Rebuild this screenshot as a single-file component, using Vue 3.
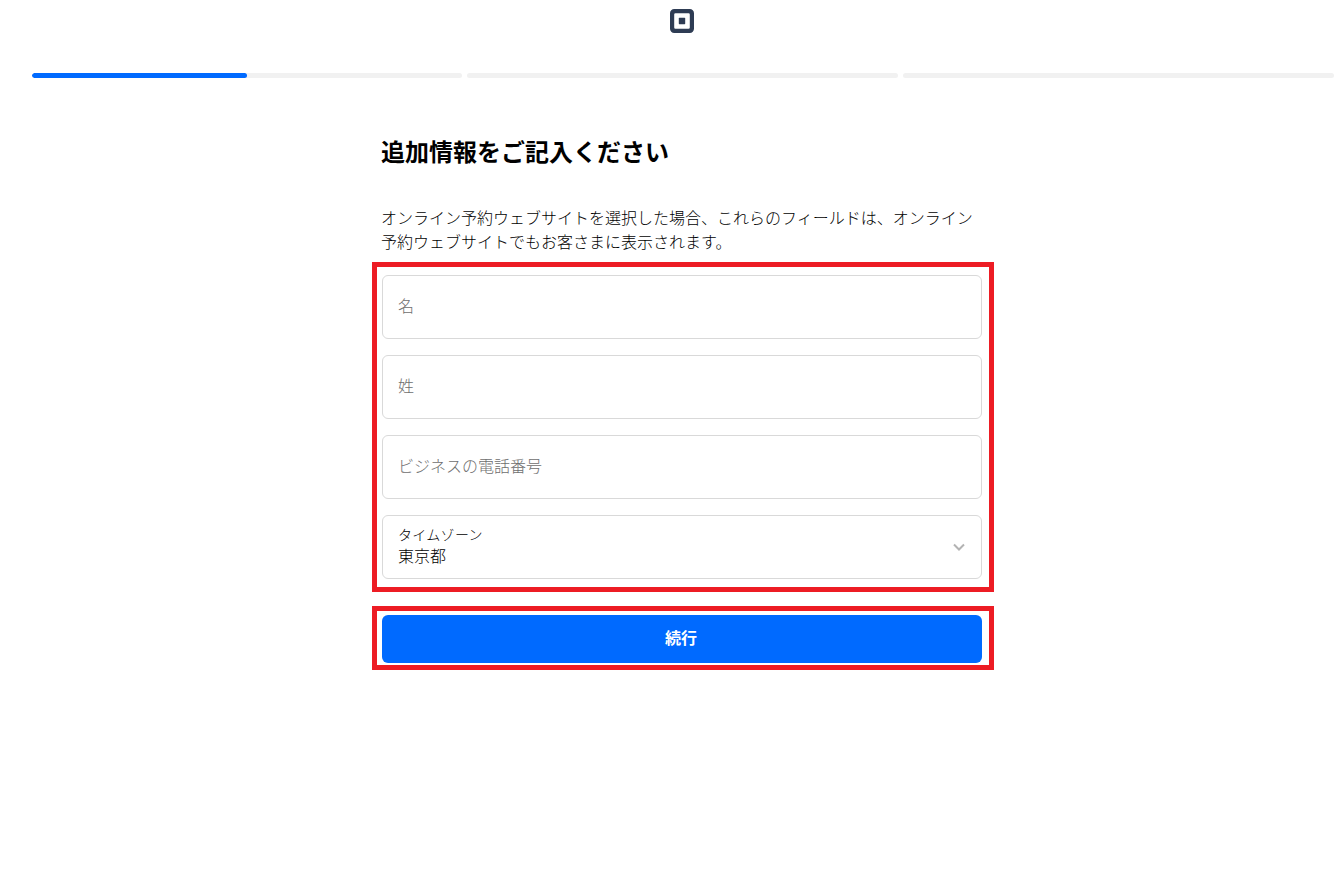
<template>
  <div class="page">
    <header class="logo-row">
      <svg class="logo" width="24" height="24" viewBox="0 0 24 24">
        <path
          fill="#2e3c54"
          fill-rule="evenodd"
          d="M4.2 0h15.6A4.2 4.2 0 0 1 24 4.2v15.6a4.2 4.2 0 0 1-4.2 4.2H4.2A4.2 4.2 0 0 1 0 19.800V4.200A4.200 4.200 0 0 1 4.200 0zM5.400 4.200a1.200 1.200 0 0 0-1.200 1.200v13.200a1.200 1.200 0 0 0 1.200 1.200h13.200a1.200 1.200 0 0 0 1.200-1.200V5.400a1.200 1.200 0 0 0-1.200-1.200z"
        />
        <rect x="8.800" y="8.800" width="6.400" height="6.400" rx="0.600" fill="#2e3c54" />
      </svg>
    </header>

    <div class="progress">
      <div v-for="(seg, i) in segments" :key="i" class="segment">
        <div class="segment-fill" :style="{ width: seg + '%' }" />
      </div>
    </div>

    <main class="content">
      <h1 class="title">追加情報をご記入ください</h1>
      <p class="desc">
        オンライン予約ウェブサイトを選択した場合、これらのフィールドは、オンライン予約ウェブサイトでもお客さまに表示されます。
      </p>

      <div class="marked fields">
        <div v-for="f in fields" :key="f" class="field">
          <span class="placeholder">{{ f }}</span>
        </div>
        <div class="field select">
          <div class="select-text">
            <span class="select-label">タイムゾーン</span>
            <span class="select-value">東京都</span>
          </div>
          <svg class="chevron" width="14" height="14" viewBox="0 0 14 14">
            <path d="M2 4.500l5 5 5-5" fill="none" stroke="#b3b3b3" stroke-width="2" />
          </svg>
        </div>
      </div>

      <div class="marked action">
        <button class="continue" type="button"><span>続行</span></button>
      </div>
    </main>
  </div>
</template>

<script setup>
const segments = [50, 0, 0];
const fields = ["名", "姓", "ビジネスの電話番号"];
</script>

<style>
html,
body {
  margin: 0;
  background: #fff;
}
</style>

<style scoped>
.page {
  box-sizing: border-box;
  height: 896px;
  overflow: hidden;
  padding: 0 12px 0 32px;
  font-family: "Noto Sans CJK JP", "Liberation Sans", sans-serif;
  color: #1a1a1a;
}

.logo-row {
  display: flex;
  justify-content: center;
  padding-top: 9px;
}

.logo {
  display: block;
}

.progress {
  display: flex;
  gap: 5px;
  margin: 40px -2px 0 0;
}

.segment {
  flex: 1;
  height: 5px;
  border-radius: 3px;
  background: #f1f1f1;
  overflow: hidden;
}

.segment:first-child {
  flex: 0 0 430px;
}

.segment-fill {
  height: 100%;
  border-radius: 3px;
  background: #006aff;
}

.content {
  width: 600px;
  margin: 0 auto;
}

.title {
  margin: 56px 0 0 -1px;
  font-size: 24px;
  line-height: 34px;
  font-weight: 700;
  color: #000;
}

.desc {
  margin: 37px 0 0 -1px;
  font-size: 16px;
  line-height: 24px;
  font-weight: 300;
  color: #000;
}

.marked {
  border: 5px solid #ed1c24;
  margin: 0 -12px 0 -10px;
  padding-left: 5px;
  padding-right: 7px;
}

.fields {
  display: flex;
  flex-direction: column;
  gap: 16px;
  margin-top: 9px;
  padding-top: 8px;
  padding-bottom: 8px;
}

.field {
  display: flex;
  align-items: center;
  justify-content: space-between;
  box-sizing: border-box;
  height: 64px;
  padding: 0 16px 0 15px;
  border: 1px solid #d9d9d9;
  border-radius: 6px;
  background: #fff;
}

.placeholder {
  padding-bottom: 4px;
  font-size: 16px;
  font-weight: 300;
  color: #6e6e6e;
}

.select-text {
  display: flex;
  flex-direction: column;
  padding-bottom: 6px;
  font-weight: 300;
  color: #000;
}

.select-label {
  font-size: 14px;
  line-height: 22px;
  letter-spacing: 0.3px;
}

.select-value {
  font-size: 16px;
  line-height: 20px;
}

.chevron {
  margin-right: -1px;
}

.action {
  margin-top: 14px;
  padding-top: 4px;
  padding-bottom: 2px;
}

.continue {
  display: block;
  width: 100%;
  height: 48px;
  padding: 0 2px 4px 0;
  border: 0;
  border-radius: 6px;
  background: #006aff;
  color: #fff;
  font-family: inherit;
  font-size: 16px;
  font-weight: 700;
}
</style>
